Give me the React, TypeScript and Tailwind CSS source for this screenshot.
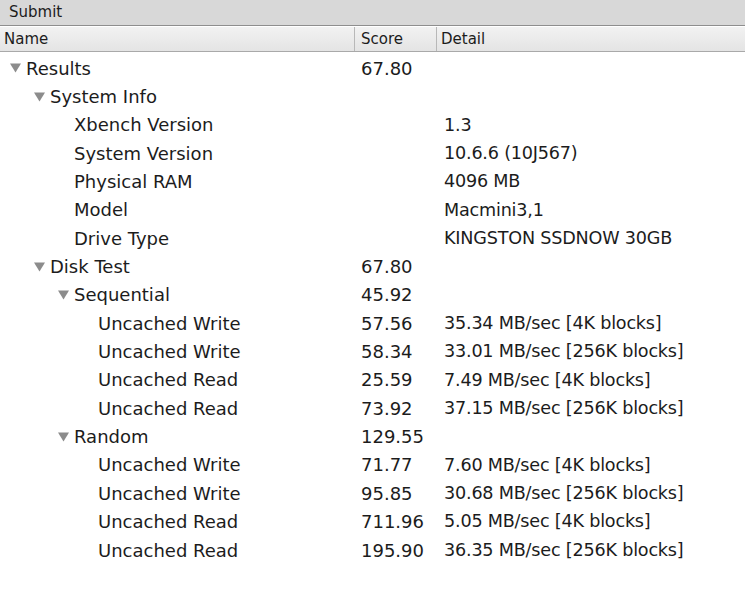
type Row = {
  name: string;
  level: number;
  open?: boolean;
  score?: string;
  detail?: string;
};

const rows: Row[] = [
  { name: "Results", level: 0, open: true, score: "67.80" },
  { name: "System Info", level: 1, open: true },
  { name: "Xbench Version", level: 2, detail: "1.3" },
  { name: "System Version", level: 2, detail: "10.6.6 (10J567)" },
  { name: "Physical RAM", level: 2, detail: "4096 MB" },
  { name: "Model", level: 2, detail: "Macmini3,1" },
  { name: "Drive Type", level: 2, detail: "KINGSTON SSDNOW 30GB" },
  { name: "Disk Test", level: 1, open: true, score: "67.80" },
  { name: "Sequential", level: 2, open: true, score: "45.92" },
  { name: "Uncached Write", level: 3, score: "57.56", detail: "35.34 MB/sec [4K blocks]" },
  { name: "Uncached Write", level: 3, score: "58.34", detail: "33.01 MB/sec [256K blocks]" },
  { name: "Uncached Read", level: 3, score: "25.59", detail: "7.49 MB/sec [4K blocks]" },
  { name: "Uncached Read", level: 3, score: "73.92", detail: "37.15 MB/sec [256K blocks]" },
  { name: "Random", level: 2, open: true, score: "129.55" },
  { name: "Uncached Write", level: 3, score: "71.77", detail: "7.60 MB/sec [4K blocks]" },
  { name: "Uncached Write", level: 3, score: "95.85", detail: "30.68 MB/sec [256K blocks]" },
  { name: "Uncached Read", level: 3, score: "711.96", detail: "5.05 MB/sec [4K blocks]" },
  { name: "Uncached Read", level: 3, score: "195.90", detail: "36.35 MB/sec [256K blocks]" },
];

function Disclosure() {
  return (
    <svg width="11" height="10" viewBox="0 0 11 10" className="shrink-0">
      <path d="M0 0.5 L11 0.5 L5.5 9.5 Z" fill="#8c8c8c" />
    </svg>
  );
}

export default function App() {
  return (
    <div className="w-[745px] h-[600px] bg-white overflow-hidden text-[#1c1c1c] font-['DejaVu_Sans',sans-serif]">
      {/* toolbar */}
      <div className="h-[26px] bg-[#d8d8d8] border-b border-[#8e8e8e] flex items-center pl-[9px] text-[15px]">
        Submit
      </div>
      {/* column header */}
      <div className="h-[26px] border-t border-white bg-gradient-to-b from-[#f2f2f2] to-[#e4e4e4] border-b border-b-[#a9a9a9] flex text-[15px]">
        <div className="w-[355px] pl-[4px] flex items-center border-r border-[#b8b8b8]">Name</div>
        <div className="w-[82px] pl-[6px] flex items-center border-r border-[#b8b8b8]">Score</div>
        <div className="flex-1 pl-[4px] flex items-center">Detail</div>
      </div>
      {/* tree rows */}
      <div className="pt-[2px] text-[18px]">
        {rows.map((r, i) => (
          <div key={i} className="h-[28.35px] flex items-center">
            <div className="w-[356px] flex items-center" style={{ paddingLeft: 10 + r.level * 24 }}>
              {r.open ? <Disclosure /> : <span className="w-[11px] shrink-0" />}
              <span className="ml-[5px] whitespace-nowrap">{r.name}</span>
            </div>
            <div className="w-[88px] pl-[5px] whitespace-nowrap">{r.score}</div>
            <div className="flex-1 whitespace-nowrap text-[17.6px] tracking-[-0.2px]">{r.detail}</div>
          </div>
        ))}
      </div>
    </div>
  );
}
